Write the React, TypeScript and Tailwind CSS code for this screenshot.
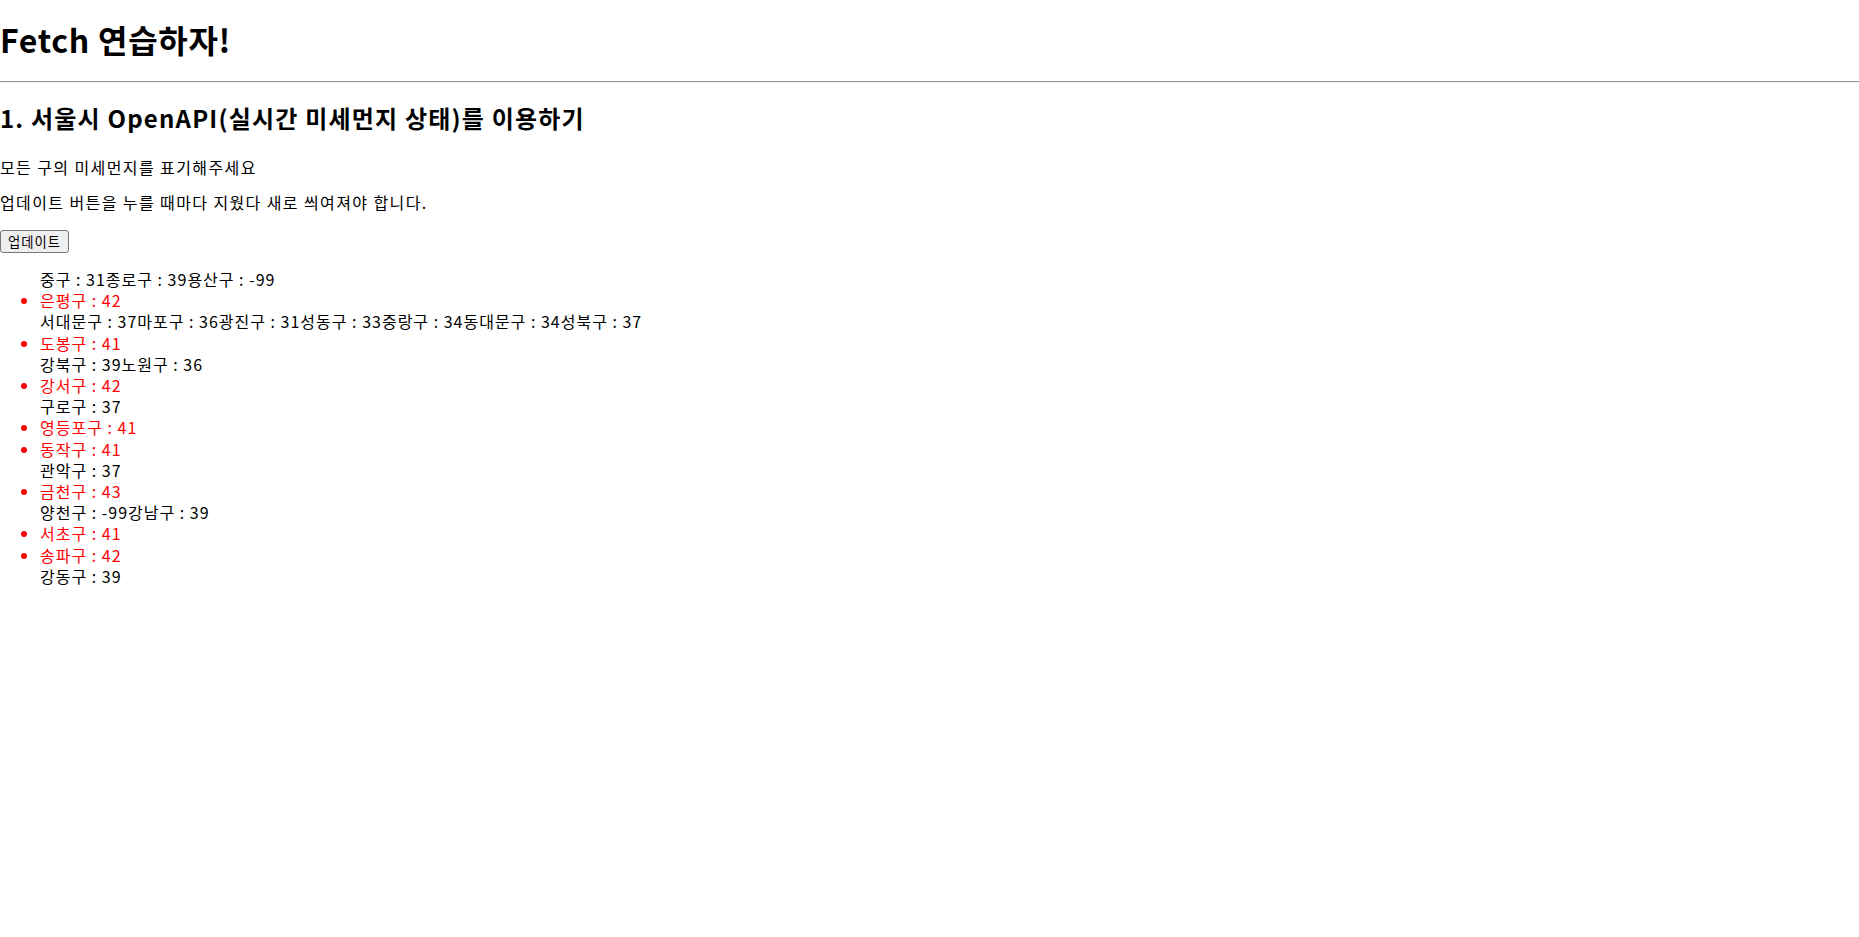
import React from 'react';

type Dust = { name: string; value: number };

const dustList: Dust[] = [
    { name: '중구', value: 31 },
    { name: '종로구', value: 39 },
    { name: '용산구', value: -99 },
    { name: '은평구', value: 42 },
    { name: '서대문구', value: 37 },
    { name: '마포구', value: 36 },
    { name: '광진구', value: 31 },
    { name: '성동구', value: 33 },
    { name: '중랑구', value: 34 },
    { name: '동대문구', value: 34 },
    { name: '성북구', value: 37 },
    { name: '도봉구', value: 41 },
    { name: '강북구', value: 39 },
    { name: '노원구', value: 36 },
    { name: '강서구', value: 42 },
    { name: '구로구', value: 37 },
    { name: '영등포구', value: 41 },
    { name: '동작구', value: 41 },
    { name: '관악구', value: 37 },
    { name: '금천구', value: 43 },
    { name: '양천구', value: -99 },
    { name: '강남구', value: 39 },
    { name: '서초구', value: 41 },
    { name: '송파구', value: 42 },
    { name: '강동구', value: 39 },
];

const App: React.FC = () => {
    return (
        <div className="font-['Noto_Sans_CJK_KR',sans-serif] text-black text-[16px]">
            <h1 className="mt-[19px] text-[32px] font-bold leading-[40px] tracking-[0.7px]">Fetch 연습하자!</h1>
            <hr className="mt-[22px] h-0 border-t border-b border-t-[#9a9a9a] border-b-[#eeeeee]" />
            <h2 className="mt-[20px] text-[24px] font-bold leading-[30px] tracking-[1.2px]">1. 서울시 OpenAPI(실시간 미세먼지 상태)를 이용하기</h2>
            <p className="mt-[24px] leading-[21px] tracking-[1.4px]">모든 구의 미세먼지를 표기해주세요</p>
            <p className="mt-[14px] leading-[21px] tracking-[1.4px]">업데이트 버튼을 누를 때마다 지웠다 새로 씌여져야 합니다.</p>
            <div className="mt-[15px]">
                <button className="border border-[#767676] rounded-[3px] bg-[#efefef] px-[7px] py-[2px] text-[13.33px] leading-[17px] tracking-[1px]">
                    업데이트
                </button>
            </div>
            <ul className="mt-[16px] pl-10 list-disc leading-[21.2px] tracking-[1px]">
                {dustList.map( ( item ) =>
                    item.value > 40 ? (
                        <li key={item.name} className="text-[#ff0000]">{`${ item.name } : ${ item.value }`}</li>
                    ) : (
                        <span key={item.name}>{`${ item.name } : ${ item.value }`}</span>
                    )
                )}
            </ul>
        </div>
    );
};

export default App;
